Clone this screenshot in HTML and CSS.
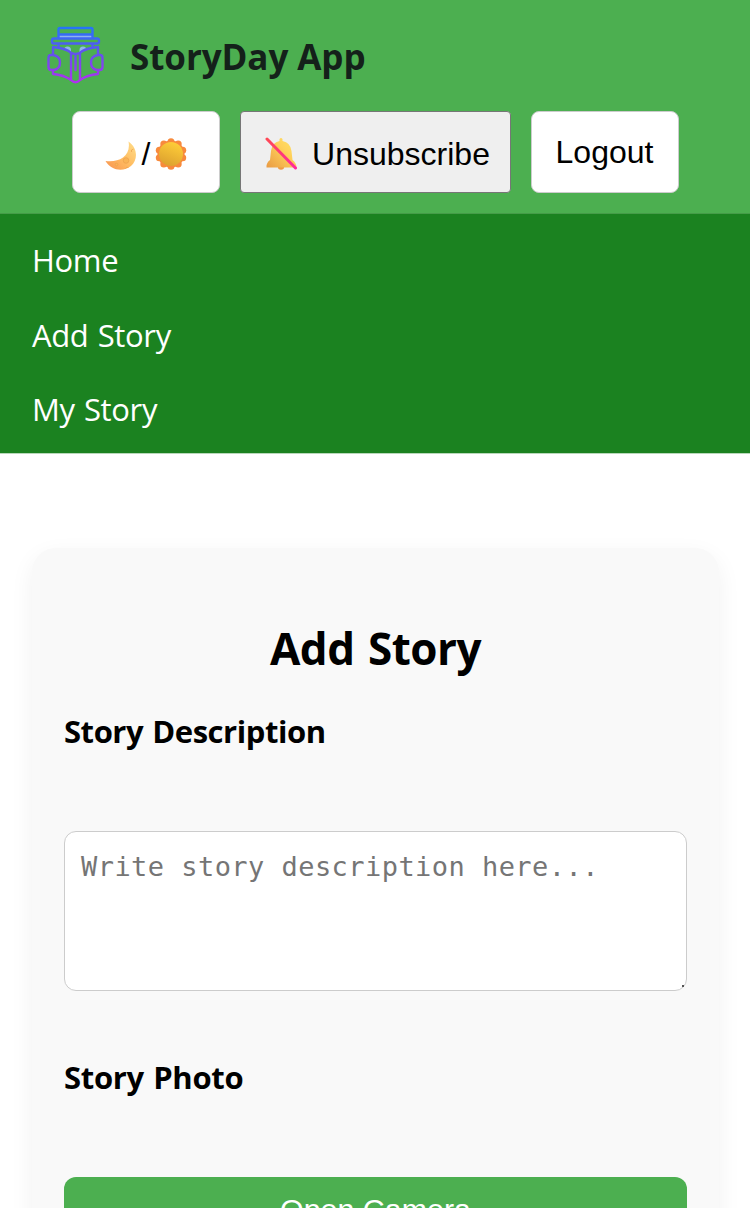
FILE: index.html
```html
<!DOCTYPE html>
<html lang="en">
<head>
<meta charset="UTF-8">
<title>StoryDay App</title>
<link rel="stylesheet" href="styles.css">
</head>
<body>
<header class="header">
  <div class="brand">
    <svg class="logo" viewBox="0 0 70 70" fill="none" stroke="url(#ink)" stroke-width="2.400" stroke-linejoin="round" stroke-linecap="round">
      <defs><linearGradient id="ink" gradientUnits="userSpaceOnUse" x1="0" y1="7" x2="0" y2="63"><stop offset="0" stop-color="#2475f8"/><stop offset=".5" stop-color="#6750ee"/><stop offset="1" stop-color="#b32ff0"/></linearGradient></defs>
      <path d="M19 14.500h33v3.500H19z" fill="#8fb3ef" stroke="none"/>
      <path d="M18.500 18V9.500q0-1.500 1.500-1.500h31q1.500 0 1.500 1.500V18M19 14.500h33"/>
      <rect x="12" y="18.500" width="47" height="5" rx="2"/>
      <path d="M18.500 24v3.500M52.500 24v3.500"/>
      <g fill="#8fb8e8" stroke="none"><path d="M24 30q0-3.500 3.500-3.500T31 30v2.500q-3-1.500-7-2.500zM39.500 30q0-3.500 3.500-3.500t3.500 3.500q-4 1-7 2.500z"/></g>
      <path d="M13 35v-8l5 .7q8 1 13 5 4.500 2.500 9 0 5-4 13-5l5-.7v8M13 50v4q11 1 18 6 4.500 4.500 9 0 7-5 18-6v-4M31 33v27M40 33v27M35.500 36v14"/>
      <path d="M13 35h-2q-2.500 0-2.500 3v9q0 3 3 3H14q6-1 6-7.500T13 35M58 35h2q2.500 0 2.500 3v9q0 3-3 3H57q-6-1-6-7.500t7-7.500"/>
    </svg>
    <h1 class="title">StoryDay App</h1>
  </div>
  <div class="actions">
    <button class="btn theme" aria-label="Theme">
      <svg class="moon" viewBox="0 0 32 30"><defs><linearGradient id="m" x1="0" y1="1" x2="1" y2="0"><stop stop-color="#f8924f"/><stop offset=".5" stop-color="#ffbd62"/><stop offset="1" stop-color="#ffdf8c"/></linearGradient></defs><path d="M23.500.5C33 7 33 19 26 25c-7 6-20 5-25.500-5 12 2 26-4 23-19.500z" fill="url(#m)"/><g fill="#f9b456" stroke="#ec9f4e" stroke-width=".7"><circle cx="21" cy="19.500" r="2.800"/><circle cx="11.500" cy="23.500" r="1.300"/><path d="M28.500 8q-3 .5-2 3M20.500 27.500q1-2 3-1" fill="none"/></g></svg>
      <span>/</span>
      <svg class="sun" viewBox="-16 -16 32 32"><defs><linearGradient id="s" x1=".7" y1="0" x2=".3" y2="1"><stop stop-color="#ffce38"/><stop offset="1" stop-color="#dca02f"/></linearGradient></defs><g fill="#f88a3c"><circle r="13.500"/><circle cy="-12.300" r="3.500"/><circle cx="7.200" cy="-10" r="3.500"/><circle cx="11.700" cy="-3.800" r="3.500"/><circle cx="11.700" cy="3.800" r="3.500"/><circle cx="7.200" cy="10" r="3.500"/><circle cy="12.300" r="3.500"/><circle cx="-7.200" cy="10" r="3.500"/><circle cx="-11.700" cy="3.800" r="3.500"/><circle cx="-11.700" cy="-3.800" r="3.500"/><circle cx="-7.200" cy="-10" r="3.500"/></g><circle r="12" fill="url(#s)"/></svg>
    </button>
    <button class="btn unsubscribe">
      <svg class="bell" viewBox="0 0 32 33"><defs><linearGradient id="b" x1="0" y1="1" x2="1" y2="0"><stop stop-color="#e99a43"/><stop offset=".6" stop-color="#ffd15a"/><stop offset="1" stop-color="#ffe56c"/></linearGradient><linearGradient id="r" x1="0" y1="0" x2="1" y2="1"><stop stop-color="#ff4855"/><stop offset="1" stop-color="#ff299f"/></linearGradient></defs><circle cx="16" cy="29.500" r="3.200" fill="#ef9b45"/><path d="M14.500 4V2q1.500-2 3 0v2q8 1.500 9 10l1 9q4 3 4 7.500H1.500Q1 26 5 23l1-9q1-8.500 8.500-10z" fill="url(#b)"/><path d="M2 2l28.500 29" stroke="url(#r)" stroke-width="3" stroke-linecap="round"/></svg>
      <span>Unsubscribe</span>
    </button>
    <button class="btn logout">Logout</button>
  </div>
</header>
<nav class="nav">
  <a class="home">Home</a>
  <a class="add">Add Story</a>
  <a class="mine">My Story</a>
</nav>
<main class="card">
  <h2 class="heading">Add Story</h2>
  <label class="label" for="description">Story Description</label>
  <div class="field">
    <textarea class="textarea" id="description" placeholder="Write story description here..."></textarea>
    <i class="grip"></i>
  </div>
  <span class="label photo">Story Photo</span>
  <button class="camera">Open Camera</button>
</main>
</body>
</html>
```
FILE: styles.css
```css
* { box-sizing: border-box; }
html { overflow: hidden; }
body { margin: 0; height: 1208px; overflow: hidden; background: #fff; color: #000; font-family: "Open Sans", "Noto Sans", sans-serif; }
.header { height: 214px; background: #4caf50; border-bottom: 1px solid #459c48; }
.brand { display: flex; height: 111px; padding: 20px 0 0 40px; }
.logo { width: 70px; height: 70px; }
.title { margin: 12px 0 0 20px; font-size: 35px; line-height: 50px; letter-spacing: -.08px; color: #14211a; white-space: nowrap; }
.actions { display: flex; gap: 20px; padding-left: 72px; }
.btn { display: flex; align-items: center; justify-content: center; height: 82px; padding: 0; border: 1px solid #ccc; border-radius: 8px; background: #fff; color: #000; font: 32px/36px "Liberation Sans", Arial, sans-serif; }
.theme { width: 148px; gap: 5px; padding-top: 4px; }
.moon { width: 32px; height: 30px; margin-top: 3px; }
.sun { width: 32px; height: 32px; }
.unsubscribe { width: 270.500px; gap: 15.500px; padding: 4px 0 0 4px; background: #efefef; border-color: #767676; border-radius: 4px; }
.bell { width: 32px; height: 33px; margin-top: -2px; }
.logout { width: 148px; }
.nav { display: flex; flex-direction: column; align-items: flex-start; gap: 30.500px; height: 240px; padding: 24px 32px; background: #1b8220; color: #fff; font-size: 31px; line-height: 44px; letter-spacing: -.35px; word-spacing: 1.500px; border-bottom: 1px solid #b8d8ba; }
.card { width: 687px; height: 800px; margin: 94px 0 0 32px; padding: 70px 32px 0; border-radius: 24px; background: #f9f9f9; box-shadow: 0 8px 24px rgba(0, 0, 0, .06); }
.heading { margin: 0; text-align: center; font-size: 44px; line-height: 60px; letter-spacing: -.5px; word-spacing: 2.500px; }
.label { display: block; margin-top: 31px; font-size: 31px; font-weight: 700; line-height: 44px; letter-spacing: -.45px; word-spacing: 1.500px; }
.field { position: relative; height: 160px; margin-top: 78px; }
.textarea { display: block; width: 623px; height: 160px; padding: 17px 16px; border: 1px solid #ccc; border-radius: 12px; resize: none; background: #fff; font: 27px/36px "DejaVu Sans Mono", monospace; letter-spacing: .45px; }
.textarea::placeholder { color: #757575; }
.grip { position: absolute; right: 3px; bottom: 4px; width: 2px; height: 2px; background: #555; }
.photo { margin-top: 64px; letter-spacing: -.3px; }
.camera { display: block; width: 623px; height: 84px; margin-top: 78px; padding: 0 0 20px; border: 0; border-radius: 12px; background: #4caf50; color: #fff; font: 30.400px/36px "Liberation Sans", Arial, sans-serif; }
```
